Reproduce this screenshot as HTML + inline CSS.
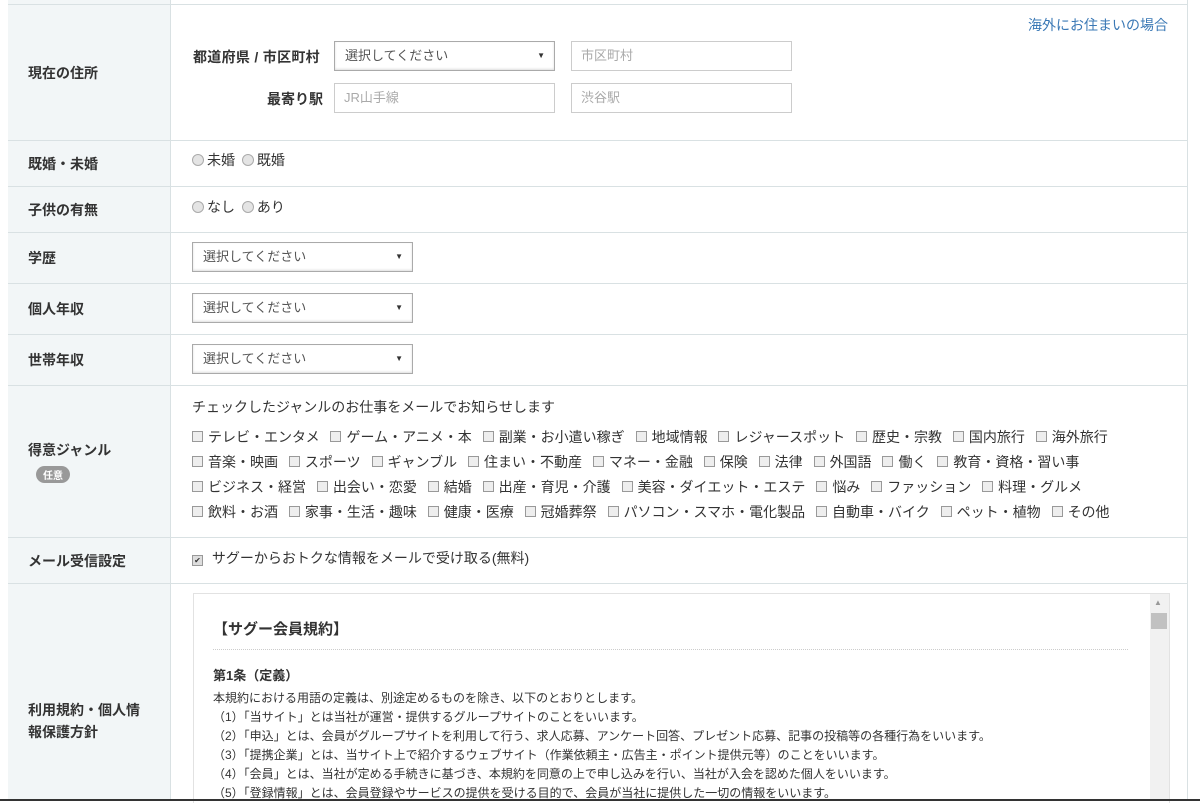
<!DOCTYPE html>
<html><head><meta charset="utf-8"><style>
*{box-sizing:border-box;margin:0;padding:0}
body{width:1200px;height:801px;overflow:hidden;background:#fff;font-family:"Liberation Sans","Noto Sans CJK JP",sans-serif;color:#333;position:relative}
.a{position:absolute}
.lab{position:absolute;left:8px;width:163px;background:#f2f6f7;border-right:1px solid #d9e1e3;font-size:14px;font-weight:bold;color:#333;padding-left:20px;display:flex;align-items:center}
.hl{position:absolute;left:8px;width:1180px;height:1px;background:#d9e1e3}
.sel{position:absolute;height:30px;border:1px solid #aaa;background:#fff;font-size:13px;color:#555;padding-left:10px;line-height:28px;box-shadow:inset 0 -1px 2px #ddd}
.sel:after{content:"▼";position:absolute;right:9px;top:0;font-size:8px;color:#333}
.inp{position:absolute;height:30px;border:1px solid #ccc;font-size:13px;color:#aaa;padding-left:9px;line-height:28px}
.rad{display:inline-block;width:12px;height:12px;border-radius:50%;border:1px solid #aaa;background:#e4e4e4;vertical-align:-1px;margin-right:3px}
.cb{display:inline-block;width:11px;height:11px;border:1px solid #999;background:#eee;vertical-align:0px;margin-right:5px;margin-left:0}
.g{position:absolute;left:192px;font-size:14px;color:#333;white-space:nowrap}
.g span{margin-right:7px}
.t{position:absolute;left:213px;font-size:12px;color:#333;white-space:nowrap}
</style></head><body>
<div class="a" style="left:8px;top:0;width:1px;height:801px;background:#d9e1e3"></div>
<div class="a" style="left:1187px;top:0;width:1px;height:801px;background:#d9e1e3"></div>
<div class="lab" style="top:0;height:4px"></div>
<div class="lab" style="top:5px;height:135px">現在の住所</div>
<div class="lab" style="top:141px;height:45px">既婚・未婚</div>
<div class="lab" style="top:187px;height:45px">子供の有無</div>
<div class="lab" style="top:233px;height:50px">学歴</div>
<div class="lab" style="top:284px;height:50px">個人年収</div>
<div class="lab" style="top:335px;height:50px">世帯年収</div>
<div class="lab" style="top:386px;height:151px;flex-direction:column;align-items:flex-start;justify-content:center">得意ジャンル<span style="display:inline-block;margin-top:6px;margin-left:8px;background:#999;color:#fff;font-size:10px;border-radius:9px;padding:1px 7px">任意</span></div>
<div class="lab" style="top:538px;height:45px">メール受信設定</div>
<div class="lab" style="top:584px;height:217px;line-height:22px;padding-top:56px">利用規約・個人情<br>報保護方針</div>
<div class="hl" style="top:4px"></div><div class="hl" style="top:140px"></div><div class="hl" style="top:186px"></div><div class="hl" style="top:232px"></div><div class="hl" style="top:283px"></div><div class="hl" style="top:334px"></div><div class="hl" style="top:385px"></div><div class="hl" style="top:537px"></div><div class="hl" style="top:583px"></div>

<div class="a" style="left:1028px;top:15px;font-size:14px;color:#3a78b5">海外にお住まいの場合</div>
<div class="a" style="left:193px;top:47px;font-size:14px;font-weight:bold;letter-spacing:0.3px">都道府県 / 市区町村</div>
<div class="sel" style="left:334px;top:41px;width:221px">選択してください</div>
<div class="inp" style="left:571px;top:41px;width:221px">市区町村</div>
<div class="a" style="left:267px;top:89px;font-size:14px;font-weight:bold">最寄り駅</div>
<div class="inp" style="left:334px;top:83px;width:221px">JR山手線</div>
<div class="inp" style="left:571px;top:83px;width:221px">渋谷駅</div>

<div class="a" style="left:192px;top:150px;font-size:14px"><span class="rad"></span>未婚 <span class="rad" style="margin-left:3px"></span>既婚</div>
<div class="a" style="left:192px;top:197px;font-size:14px"><span class="rad"></span>なし <span class="rad" style="margin-left:3px"></span>あり</div>
<div class="sel" style="left:192px;top:242px;width:221px">選択してください</div>
<div class="sel" style="left:192px;top:293px;width:221px">選択してください</div>
<div class="sel" style="left:192px;top:344px;width:221px">選択してください</div>

<div class="g" style="top:397px">チェックしたジャンルのお仕事をメールでお知らせします</div>
<div class="g" style="top:427px"><span><i class="cb"></i>テレビ・エンタメ</span> <span><i class="cb"></i>ゲーム・アニメ・本</span> <span><i class="cb"></i>副業・お小遣い稼ぎ</span> <span><i class="cb"></i>地域情報</span> <span><i class="cb"></i>レジャースポット</span> <span><i class="cb"></i>歴史・宗教</span> <span><i class="cb"></i>国内旅行</span> <span><i class="cb"></i>海外旅行</span></div>
<div class="g" style="top:452px"><span><i class="cb"></i>音楽・映画</span> <span><i class="cb"></i>スポーツ</span> <span><i class="cb"></i>ギャンブル</span> <span><i class="cb"></i>住まい・不動産</span> <span><i class="cb"></i>マネー・金融</span> <span><i class="cb"></i>保険</span> <span><i class="cb"></i>法律</span> <span><i class="cb"></i>外国語</span> <span><i class="cb"></i>働く</span> <span><i class="cb"></i>教育・資格・習い事</span></div>
<div class="g" style="top:477px"><span><i class="cb"></i>ビジネス・経営</span> <span><i class="cb"></i>出会い・恋愛</span> <span><i class="cb"></i>結婚</span> <span><i class="cb"></i>出産・育児・介護</span> <span><i class="cb"></i>美容・ダイエット・エステ</span> <span><i class="cb"></i>悩み</span> <span><i class="cb"></i>ファッション</span> <span><i class="cb"></i>料理・グルメ</span></div>
<div class="g" style="top:502px"><span><i class="cb"></i>飲料・お酒</span> <span><i class="cb"></i>家事・生活・趣味</span> <span><i class="cb"></i>健康・医療</span> <span><i class="cb"></i>冠婚葬祭</span> <span><i class="cb"></i>パソコン・スマホ・電化製品</span> <span><i class="cb"></i>自動車・バイク</span> <span><i class="cb"></i>ペット・植物</span> <span><i class="cb"></i>その他</span></div>
<div class="g" style="top:548px"><i class="cb" style="background:#ddd;text-align:center;font-size:8px;line-height:9px;font-style:normal">✔</i> サグーからおトクな情報をメールで受け取る(無料)</div>

<div class="a" style="left:193px;top:593px;width:977px;height:210px;border:1px solid #e2e2e2;border-bottom:none"></div>
<div class="a" style="left:1150px;top:594px;width:19px;height:207px;background:#f1f1f1"></div>
<div class="a" style="left:1154px;top:598px;font-size:8px;color:#999">▲</div>
<div class="a" style="left:1151px;top:613px;width:16px;height:16px;background:#c1c1c1"></div>
<div class="a" style="left:213px;top:618px;font-size:15px;font-weight:bold">【サグー会員規約】</div>
<div class="a" style="left:213px;top:649px;width:915px;border-top:1px dotted #ccc"></div>
<div class="t" style="top:665px;font-size:13px;font-weight:bold">第1条（定義）</div>
<div class="t" style="top:689px">本規約における用語の定義は、別途定めるものを除き、以下のとおりとします。</div>
<div class="t" style="top:708px">（1）「当サイト」とは当社が運営・提供するグループサイトのことをいいます。</div>
<div class="t" style="top:727px">（2）「申込」とは、会員がグループサイトを利用して行う、求人応募、アンケート回答、プレゼント応募、記事の投稿等の各種行為をいいます。</div>
<div class="t" style="top:746px">（3）「提携企業」とは、当サイト上で紹介するウェブサイト（作業依頼主・広告主・ポイント提供元等）のことをいいます。</div>
<div class="t" style="top:765px">（4）「会員」とは、当社が定める手続きに基づき、本規約を同意の上で申し込みを行い、当社が入会を認めた個人をいいます。</div>
<div class="t" style="top:784px">（5）「登録情報」とは、会員登録やサービスの提供を受ける目的で、会員が当社に提供した一切の情報をいいます。</div>
<div class="a" style="left:0;top:799px;width:1200px;height:2px;background:#333"></div>
</body></html>
